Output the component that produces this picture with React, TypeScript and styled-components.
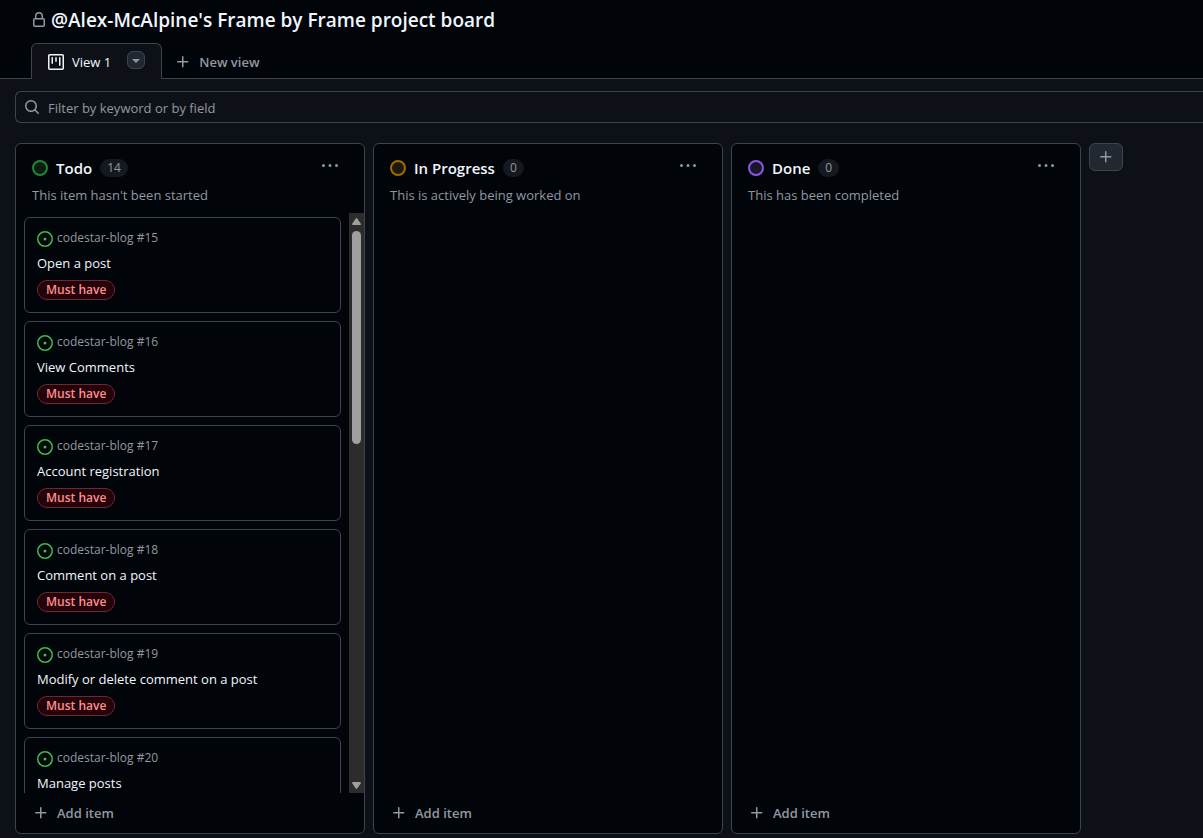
import React from "react";
import styled, { createGlobalStyle } from "styled-components";

const color = {
  canvas: "#0d1117",
  inset: "#010409",
  border: "#3d444d",
  text: "#f0f6fc",
  muted: "#9198a1",
  control: "#212830",
};

const GlobalStyle = createGlobalStyle`
  *, *::before, *::after { box-sizing: border-box; }
  body {
    margin: 0;
    background: ${color.canvas};
    color: ${color.text};
    font: 13px/20px "Segoe UI", "Open Sans", "Noto Sans", sans-serif;
  }
  button, input { font: inherit; color: inherit; }
  button { padding: 0; border: 0; background: none; cursor: pointer; }
  svg { display: block; flex: none; }
  h1, h2, h3, p, ul { margin: 0; padding: 0; }
`;

const Page = styled.div`
  display: flex;
  flex-direction: column;
  height: 100vh;
  min-height: 480px;
  overflow: hidden;
`;

const Header = styled.header`
  background: ${color.inset};
`;

const TitleRow = styled.div`
  display: flex;
  align-items: center;
  gap: 4px;
  padding: 6px 31px 9px;
  color: ${color.muted};
`;

const Title = styled.h1`
  color: ${color.text};
  font-size: 19px;
  line-height: 28px;
  font-weight: 600;
`;

const Tabs = styled.nav`
  display: flex;
  height: 36px;
  padding-left: 31px;
  box-shadow: inset 0 -1px ${color.border};
`;

const Tab = styled.div`
  display: flex;
  align-items: center;
  gap: 16px;
  padding: 0 16px;
  border: 1px solid ${color.border};
  border-bottom: 0;
  border-radius: 6px 6px 0 0;
  background: ${color.canvas};
`;

const TabLink = styled.a`
  display: flex;
  align-items: center;
  gap: 8px;
  color: ${color.text};
  text-decoration: none;
`;

const TabMenu = styled.button`
  display: grid;
  place-items: center;
  width: 18px;
  height: 18px;
  margin-bottom: 3px;
  border: 1px solid ${color.border};
  border-radius: 6px;
  background: ${color.control};
  color: ${color.muted};
`;

const GhostButton = styled.button`
  display: flex;
  align-items: center;
  gap: 8px;
  color: ${color.muted};
  font-weight: 600;
`;

const NewView = styled(GhostButton)`
  padding: 2px 13px 0;
`;

const Filter = styled.label`
  display: flex;
  flex: none;
  align-items: center;
  gap: 8px;
  height: 32px;
  margin: 12px 0 20px 15px;
  padding-left: 8px;
  border: 1px solid ${color.border};
  border-right: 0;
  border-radius: 6px 0 0 6px;
  color: ${color.muted};
`;

const FilterInput = styled.input`
  flex: 1;
  min-width: 0;
  padding: 2px 0 0;
  border: 0;
  outline: 0;
  background: transparent;
  color: ${color.text};
  &::placeholder { color: ${color.muted}; opacity: 1; }
`;

const Board = styled.main`
  display: flex;
  flex: 1;
  align-items: stretch;
  gap: 8px;
  min-height: 0;
  padding: 0 15px 4px;
`;

const Column = styled.section`
  display: flex;
  flex: 0 0 350px;
  flex-direction: column;
  border: 1px solid ${color.border};
  border-radius: 6px;
  background: ${color.inset};
  overflow: hidden;
`;

const ColumnHeader = styled.div`
  display: flex;
  align-items: center;
  gap: 8px;
  height: 24px;
  margin-top: 12px;
  padding: 0 26px 0 16px;
`;

const StatusDot = styled.span<{ $ring: string; $fill: string }>`
  width: 16px;
  height: 16px;
  border: 2px solid ${(p) => p.$ring};
  border-radius: 50%;
  background: ${(p) => p.$fill};
`;

const ColumnName = styled.h2`
  font-size: 15px;
  line-height: 24px;
  font-weight: 600;
`;

const Counter = styled.span`
  min-width: 20px;
  padding: 0 7px;
  border-radius: 9px;
  background: #15191f;
  color: ${color.muted};
  font-size: 12px;
  line-height: 18px;
  font-weight: 500;
  text-align: center;
`;

const MenuButton = styled.button`
  margin: 0 0 4px auto;
  color: ${color.muted};
`;

const ColumnNote = styled.p`
  padding: 5px 16px 8px;
  color: ${color.muted};
`;

const ColumnBody = styled.div`
  display: flex;
  flex: 1;
  min-height: 0;
`;

const CardList = styled.ul`
  display: flex;
  flex: 1;
  flex-direction: column;
  gap: 8px;
  padding: 4px 8px;
  overflow-y: auto;
  scrollbar-width: none;
  list-style: none;
`;

const Card = styled.li`
  flex: none;
  padding: 10px 12px 12px;
  border: 1px solid ${color.border};
  border-radius: 6px;
`;

const CardRef = styled.div`
  display: flex;
  align-items: flex-end;
  gap: 4px;
  color: ${color.muted};
  font-size: 12px;
  svg { margin-bottom: 1px; color: #3fb950; }
`;

const CardTitle = styled.h3`
  margin: 5px 0 7px;
  font-size: 13px;
  line-height: 20px;
  font-weight: 400;
`;

const Label = styled.span`
  display: block;
  width: fit-content;
  padding: 0 8px;
  border: 1px solid #6b2a2f;
  border-radius: 10px;
  background: #25020a;
  color: #ff8f8f;
  font-size: 12px;
  line-height: 18px;
  font-weight: 600;
`;

const Scrollbar = styled.div`
  display: flex;
  flex-direction: column;
  align-items: center;
  justify-content: space-between;
  width: 15px;
  padding: 5px 0 4px;
  background: #2c2c2c;
`;

const Track = styled.div`
  flex: 1;
  width: 9px;
  margin: 6px 0;
`;

const Thumb = styled.div`
  height: 39%;
  border-radius: 5px;
  background: #9f9f9f;
`;

const AddItem = styled(GhostButton)`
  height: 40px;
  padding: 0 17px;
`;

const AddColumn = styled.button`
  display: grid;
  flex: none;
  place-items: center;
  width: 34px;
  height: 28px;
  border: 1px solid ${color.border};
  border-radius: 6px;
  background: ${color.control};
  color: ${color.muted};
`;

const icons = {
  lock: "M4 4a4 4 0 0 1 8 0v2h.25c.966 0 1.75.784 1.75 1.75v5.5A1.75 1.75 0 0 1 12.25 15h-8.5A1.75 1.75 0 0 1 2 13.25v-5.5C2 6.784 2.784 6 3.75 6H4Zm8.25 3.5h-8.5a.25.25 0 0 0-.25.25v5.5c0 .138.112.25.25.25h8.5a.25.25 0 0 0 .25-.25v-5.5a.25.25 0 0 0-.25-.25ZM10.5 6V4a2.5 2.5 0 1 0-5 0v2Z",
  project:
    "M1.75 0h12.5C15.216 0 16 .784 16 1.75v12.5A1.75 1.75 0 0 1 14.25 16H1.75A1.75 1.75 0 0 1 0 14.25V1.75C0 .784.784 0 1.75 0ZM1.5 1.75v12.5c0 .138.112.25.25.25h12.5a.25.25 0 0 0 .25-.25V1.75a.25.25 0 0 0-.25-.25H1.75a.25.25 0 0 0-.25.25ZM11.75 3a.75.75 0 0 1 .75.75v7.5a.75.75 0 0 1-1.5 0v-7.5a.75.75 0 0 1 .75-.75Zm-8.25.75a.75.75 0 0 1 1.5 0v5.5a.75.75 0 0 1-1.5 0ZM8 3a.75.75 0 0 1 .75.75v3.5a.75.75 0 0 1-1.5 0v-3.5A.75.75 0 0 1 8 3Z",
  plus: "M7.75 2a.75.75 0 0 1 .75.75V7h4.25a.75.75 0 0 1 0 1.5H8.5v4.25a.75.75 0 0 1-1.5 0V8.5H2.75a.75.75 0 0 1 0-1.5H7V2.75A.75.75 0 0 1 7.75 2Z",
  search:
    "M10.68 11.74a6 6 0 0 1-7.922-8.982 6 6 0 0 1 8.982 7.922l3.04 3.04a.749.749 0 0 1-.326 1.275.749.749 0 0 1-.734-.215ZM11.5 7a4.499 4.499 0 1 0-8.997 0A4.499 4.499 0 0 0 11.5 7Z",
  issue:
    "M8 9.5a1.5 1.5 0 1 0 0-3 1.5 1.5 0 0 0 0 3ZM8 0a8 8 0 1 1 0 16A8 8 0 0 1 8 0ZM1.5 8a6.5 6.5 0 1 0 13 0 6.5 6.5 0 0 0-13 0Z",
  kebab:
    "M8 9a1.5 1.5 0 1 0 0-3 1.5 1.5 0 0 0 0 3ZM1.5 9a1.5 1.5 0 1 0 0-3 1.5 1.5 0 0 0 0 3Zm13 0a1.5 1.5 0 1 0 0-3 1.5 1.5 0 0 0 0 3Z",
  triangle:
    "m4.427 7.427 3.396 3.396a.25.25 0 0 0 .354 0l3.396-3.396A.25.25 0 0 0 11.396 7H4.604a.25.25 0 0 0-.177.427Z",
};

const Icon = ({ name }: { name: keyof typeof icons }) => (
  <svg width="16" height="16" viewBox="0 0 16 16" fill="currentColor" aria-hidden="true">
    <path d={icons[name]} />
  </svg>
);

type Issue = { number: number; title: string };

const issues: Issue[] = [
  { number: 15, title: "Open a post" },
  { number: 16, title: "View Comments" },
  { number: 17, title: "Account registration" },
  { number: 18, title: "Comment on a post" },
  { number: 19, title: "Modify or delete comment on a post" },
  { number: 20, title: "Manage posts" },
];

const columns = [
  { name: "Todo", count: 14, note: "This item hasn't been started", ring: "#238636", fill: "#0b1d15", items: issues },
  { name: "In Progress", count: 0, note: "This is actively being worked on", ring: "#9e6a03", fill: "#1f180d", items: [] },
  { name: "Done", count: 0, note: "This has been completed", ring: "#8957e5", fill: "#1b172b", items: [] },
];

const ScrollArrow = ({ down = false }: { down?: boolean }) => (
  <svg width="9" height="7" viewBox="0 0 9 7" aria-hidden="true">
    <path
      d={down ? "M0 1Q0 0 1 0H8Q9 0 9 1L5.4 6.3Q4.5 7.5 3.6 6.3Z" : "M0 6Q0 7 1 7H8Q9 7 9 6L5.4 .7Q4.5-.5 3.6 .7Z"}
      fill="#9f9f9f"
    />
  </svg>
);

export default function App() {
  return (
    <>
      <GlobalStyle />
      <Page>
        <Header>
          <TitleRow>
            <Icon name="lock" />
            <Title>@Alex-McAlpine's Frame by Frame project board</Title>
          </TitleRow>
          <Tabs aria-label="Views">
            <Tab>
              <TabLink href="#view-1" aria-current="page">
                <Icon name="project" />
                View 1
              </TabLink>
              <TabMenu aria-label="View options">
                <Icon name="triangle" />
              </TabMenu>
            </Tab>
            <NewView>
              <Icon name="plus" />
              New view
            </NewView>
          </Tabs>
        </Header>
        <Filter>
          <Icon name="search" />
          <FilterInput type="text" aria-label="Filter" placeholder="Filter by keyword or by field" />
        </Filter>
        <Board>
          {columns.map((column) => (
            <Column key={column.name}>
              <ColumnHeader>
                <StatusDot $ring={column.ring} $fill={column.fill} />
                <ColumnName>{column.name}</ColumnName>
                <Counter>{column.count}</Counter>
                <MenuButton aria-label={`Actions for ${column.name}`}>
                  <Icon name="kebab" />
                </MenuButton>
              </ColumnHeader>
              <ColumnNote>{column.note}</ColumnNote>
              <ColumnBody>
                <CardList>
                  {column.items.map((issue) => (
                    <Card key={issue.number}>
                      <CardRef>
                        <Icon name="issue" />
                        codestar-blog #{issue.number}
                      </CardRef>
                      <CardTitle>{issue.title}</CardTitle>
                      <Label>Must have</Label>
                    </Card>
                  ))}
                </CardList>
                {column.items.length > 0 && (
                  <Scrollbar aria-hidden="true">
                    <ScrollArrow />
                    <Track>
                      <Thumb />
                    </Track>
                    <ScrollArrow down />
                  </Scrollbar>
                )}
              </ColumnBody>
              <AddItem>
                <Icon name="plus" />
                Add item
              </AddItem>
            </Column>
          ))}
          <AddColumn aria-label="Add column">
            <Icon name="plus" />
          </AddColumn>
        </Board>
      </Page>
    </>
  );
}
